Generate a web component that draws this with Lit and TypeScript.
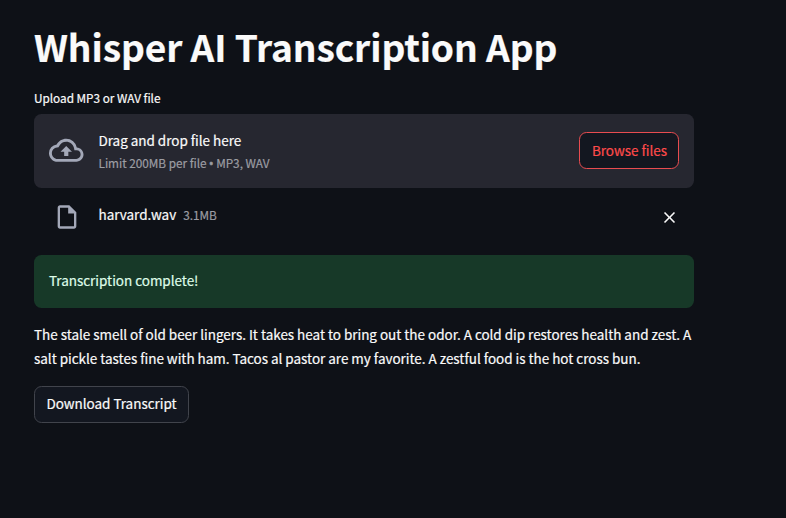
import { LitElement, html, css } from "lit";
import { customElement, property } from "lit/decorators.js";

@customElement("app-root")
export class AppRoot extends LitElement {
  static styles = css`
    :host {
      display: block;
      box-sizing: border-box;
      height: 100vh;
      padding: 21px 92px 0 34px;
      overflow: hidden;
      background: #0e1117;
      color: #fafafa;
      font: 13.5px/24px "Source Sans Pro", "Noto Sans CJK SC", sans-serif;
      letter-spacing: -0.029px;
      -webkit-text-stroke: 0.2px currentColor;
    }
    .title { margin: 0; font-size: 37.1px; font-weight: 700; line-height: 50px; letter-spacing: -0.09px; white-space: nowrap; }
    .label { margin-top: 16px; font-size: 11.8px; line-height: 21px; }
    .upload {
      display: flex;
      align-items: center;
      box-sizing: border-box;
      height: 74px;
      margin-top: 6px;
      padding: 0 15px 1px;
      border-radius: 7.5px;
      background: #262730;
    }
    .cloud { width: 34.5px; height: 34.5px; margin-right: 15px; fill: #a3a8b8; }
    .hint { flex: 1; }
    .hint div { line-height: 24px; }
    .small { font-size: 11.8px; color: #9c9da3; }
    .hint .small { margin-bottom: -1px; line-height: 21px; }
    .dot { font-family: "Open Sans", sans-serif; -webkit-text-stroke-width: 0.7px; }
    button {
      box-sizing: border-box;
      height: 37px;
      padding: 0 11px 1px;
      border: 1px solid #41444c;
      border-radius: 7.5px;
      background: #131720;
      color: #fafafa;
      font: inherit;
      letter-spacing: inherit;
      white-space: nowrap;
    }
    .browse { width: 100px; padding: 0 10px 1px 11px; border-color: #e84c50; color: #ff4b4b; }
    .download { display: block; width: 155px; margin-top: 16px; padding-bottom: 3px; }
    .success {
      height: 53px;
      margin-top: 23px;
      padding: 0 15px;
      border-radius: 7.5px;
      background: #173928;
      color: #dffde9;
      line-height: 51px;
    }
    .transcript { margin: 14px -10px 0 0; white-space: pre-line; }
  `;

  render() {
    return html`
      <h1 class="title">Whisper AI Transcription App</h1>
      <div class="label">Upload MP3 or WAV file</div>
      <section class="upload">
        <svg class="cloud" viewBox="0 0 24 24">
          <path d="M19.35 10.04A7.49 7.49 0 0 0 12 4C9.11 4 6.6 5.64 5.35 8.04A5.994 5.994 0 0 0 0 14c0 3.31 2.69 6 6 6h13c2.76 0 5-2.24 5-5 0-2.64-2.05-4.78-4.65-4.96zM19 18H6c-2.21 0-4-1.79-4-4 0-2.05 1.53-3.76 3.56-3.97l1.07-.11.5-.95A5.469 5.469 0 0 1 12 6c2.62 0 4.88 1.86 5.39 4.43l.3 1.5 1.53.11A2.98 2.98 0 0 1 22 15c0 1.65-1.35 3-3 3zM8 13h2.55v3h2.9v-3H16l-4-4z"/>
        </svg>
        <div class="hint">
          <div>Drag and drop file here</div>
          <div class="small">Limit 200MB per file <span class="dot">•</span> MP3, WAV</div>
        </div>
        <button class="browse">Browse files</button>
      </section>
      <uploaded-file name="harvard.wav" size="3.1MB"></uploaded-file>
      <div class="success">Transcription complete!</div>
      <p class="transcript">${"The stale smell of old beer lingers. It takes heat to bring out the odor. A cold dip restores health and zest. A\nsalt pickle tastes fine with ham. Tacos al pastor are my favorite. A zestful food is the hot cross bun."}</p>
      <button class="download">Download Transcript</button>
    `;
  }
}

@customElement("uploaded-file")
export class UploadedFile extends LitElement {
  @property() name = "";
  @property() size = "";

  static styles = css`
    :host { display: flex; align-items: center; height: 30px; margin-top: 14px; padding: 0 15px 0 18.5px; }
    .file { width: 28px; height: 28px; margin: 0 18px 0 0; fill: #a3a8b8; }
    .name { line-height: 24px; margin-top: -6px; }
    .size { flex: 1; margin: -4px 0 0 7px; font-size: 11.8px; line-height: 24px; color: #9c9da3; }
    .close { width: 19px; height: 19px; fill: #fafafa; }
  `;

  render() {
    return html`
      <svg class="file" viewBox="0 0 24 24">
        <path d="M14 2H6c-1.1 0-1.99.9-1.99 2L4 20c0 1.1.89 2 1.99 2H18c1.1 0 2-.9 2-2V8l-6-6zM6 20V4h7v5h5v11H6z"/>
      </svg>
      <span class="name">${this.name}</span>
      <span class="size">${this.size}</span>
      <svg class="close" viewBox="0 0 24 24">
        <path d="M19 6.41 17.59 5 12 10.59 6.41 5 5 6.41 10.59 12 5 17.59 6.41 19 12 13.41 17.59 19 19 17.59 13.41 12z"/>
      </svg>
    `;
  }
}
